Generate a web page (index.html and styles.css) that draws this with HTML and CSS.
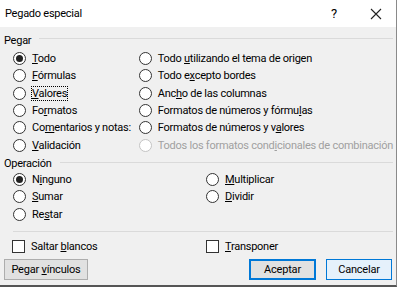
FILE: index.html
```html
<!DOCTYPE html>
<html>
<head>
<meta charset="utf-8">
<link rel="stylesheet" href="styles.css">
</head>
<body>
<div class="window">
  <div class="titlebar">
    <span class="title">Pegado especial</span>
    <span class="help">?</span>
    <svg class="close" width="12" height="12" viewBox="0 0 12 12"><path d="M1 1L11 11M11 1L1 11" stroke="#222" stroke-width="1.1"/></svg>
  </div>
  <div class="content">
    <div class="group-title"><span>Pegar</span><i></i></div>
    <div class="paste-grid">
      <div class="col left">
        <div class="opt"><b class="radio on"></b><span><u>T</u>odo</span></div>
        <div class="opt"><b class="radio"></b><span><u>F</u>órmulas</span></div>
        <div class="opt"><b class="radio"></b><span class="focus"><u>V</u>alores</span></div>
        <div class="opt"><b class="radio"></b><span>Fo<u>r</u>matos</span></div>
        <div class="opt"><b class="radio"></b><span>Co<u>m</u>entarios y notas:</span></div>
        <div class="opt"><b class="radio"></b><span><u>V</u>alidación</span></div>
      </div>
      <div class="col right">
        <div class="opt"><b class="radio"></b><span>Todo <u>u</u>tilizando el tema de origen</span></div>
        <div class="opt"><b class="radio"></b><span>Todo e<u>x</u>cepto bordes</span></div>
        <div class="opt"><b class="radio"></b><span>Anc<u>h</u>o de las columnas</span></div>
        <div class="opt"><b class="radio"></b><span>Formatos de números y fórmu<u>l</u>as</span></div>
        <div class="opt"><b class="radio"></b><span>Formatos de números y v<u>a</u>lores</span></div>
        <div class="opt disabled"><b class="radio"></b><span>Todos los formatos cond<u>i</u>cionales de combinación</span></div>
      </div>
    </div>
    <div class="group-title op"><span>Operación</span><i></i></div>
    <div class="op-grid">
      <div class="col left">
        <div class="opt"><b class="radio on"></b><span>N<u>i</u>nguno</span></div>
        <div class="opt"><b class="radio"></b><span><u>S</u>umar</span></div>
        <div class="opt"><b class="radio"></b><span>Re<u>s</u>tar</span></div>
      </div>
      <div class="col right">
        <div class="opt"><b class="radio"></b><span><u>M</u>ultiplicar</span></div>
        <div class="opt"><b class="radio"></b><span><u>D</u>ividir</span></div>
      </div>
    </div>
    <div class="sep"></div>
    <div class="checks">
      <div class="opt"><b class="check"></b><span>Saltar <u>b</u>lancos</span></div>
      <div class="opt"><b class="check"></b><span><u>T</u>ransponer</span></div>
    </div>
    <div class="buttons">
      <button class="btn"><span>Pegar <u>v</u>ínculos</span></button>
      <span class="spacer"></span>
      <button class="btn default">Aceptar</button>
      <button class="btn hover">Cancelar</button>
    </div>
  </div>
</div>
</body>
</html>
```

FILE: styles.css
```css
* {
  box-sizing: border-box;
}

body {
  margin: 0;
  background: #fff;
  font-family: Roboto, "Noto Sans", sans-serif;
  font-size: 11px;
  letter-spacing: -0.25px;
  color: #000;
}

.window {
  width: 397px;
  height: 287px;
  border-right: 1px solid #8a8a8a;
  border-bottom: 2px solid #555;
  background: #f0f0f0;
  display: flex;
  flex-direction: column;
}

.titlebar {
  height: 27px;
  background: #fff;
  display: flex;
  align-items: center;
  padding-left: 5px;
}

.title {
  flex: 1;
  font-size: 11px;
}

.help {
  font-size: 13px;
  margin-right: 33px;
}

.close {
  margin-right: 14px;
}

.content {
  padding: 5px 3px 0 4px;
  flex: 1;
  display: flex;
  flex-direction: column;
}

.group-title {
  display: flex;
  align-items: center;
  height: 16px;
}

.group-title i {
  flex: 1;
  height: 1px;
  background: #dadada;
  margin-left: 8px;
  margin-top: -3px;
}

.group-title.op {
  margin-top: 2px;
}

.paste-grid, .op-grid {
  display: flex;
  padding-left: 9px;
  margin-top: 2px;
}

.op-grid {
  margin-top: -1px;
}

.col {
  display: flex;
  flex-direction: column;
}

.paste-grid .left {
  width: 127px;
}

.op-grid .left {
  width: 193px;
}

.opt {
  height: 17.3px;
  display: flex;
  align-items: center;
  white-space: nowrap;
}

.opt.disabled {
  color: #a0a0a0;
}

.radio {
  width: 13px;
  height: 13px;
  border: 1px solid #333;
  border-radius: 50%;
  background: #fff;
  margin-right: 6px;
  flex: none;
  display: flex;
  align-items: center;
  justify-content: center;
}

.radio.on::after {
  content: "";
  width: 7px;
  height: 7px;
  border-radius: 50%;
  background: #222;
}

.disabled .radio {
  border-color: #c4c4c4;
}

.focus {
  outline: 1px dotted #000;
  outline-offset: 0;
  line-height: 13px;
}

.sep {
  height: 1px;
  background: #dadada;
  margin: 8px 0 0 9px;
}

.checks {
  display: flex;
  padding-left: 8px;
  margin-top: 6px;
}

.checks .opt:first-child {
  width: 194px;
}

.check {
  width: 13px;
  height: 13px;
  border: 1px solid #333;
  background: #fff;
  margin-right: 6px;
  flex: none;
}

.buttons {
  display: flex;
  margin-top: 4px;
}

.spacer {
  flex: 1;
}

.btn {
  font-family: inherit;
  font-size: 11px;
  letter-spacing: -0.2px;
  height: 21px;
  padding: 0;
  background: #e1e1e1;
  border: 1px solid #adadad;
  width: 84px;
  margin-right: 10px;
  white-space: nowrap;
}

.btn.default {
  width: 67px;
  border: 2px solid #0078d7;
}

.btn.hover {
  width: 66px;
  margin-right: 1px;
  background: #e5f1fb;
  border: 1px solid #0078d7;
}
```
